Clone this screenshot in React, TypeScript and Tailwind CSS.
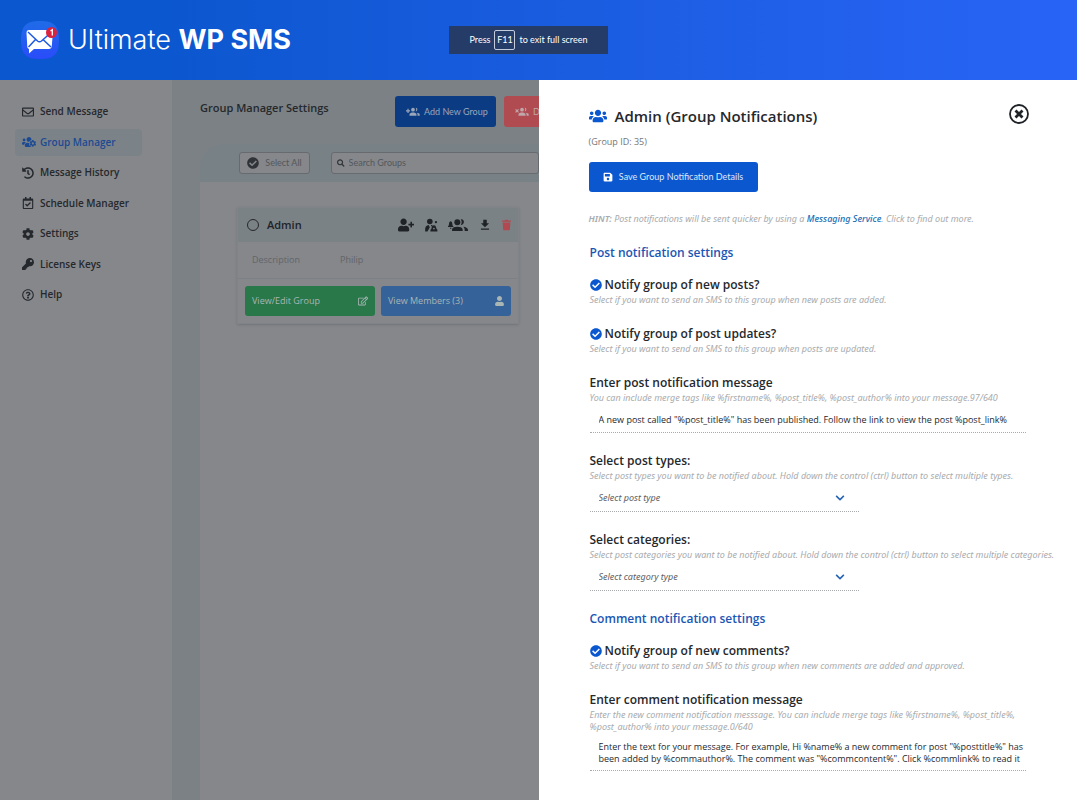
import { useState } from "react";
import type { ReactNode } from "react";
import {
  FaChevronDown,
  FaCog,
  FaCheckCircle,
  FaHistory,
  FaKey,
  FaRegCalendarCheck,
  FaRegEdit,
  FaRegEnvelope,
  FaRegQuestionCircle,
  FaSave,
  FaSearch,
  FaTrash,
  FaUser,
  FaUserPlus,
  FaUsers,
  FaUsersCog,
} from "react-icons/fa";
import { MdDownload } from "react-icons/md";

const NAV = [
  { label: "Send Message", icon: FaRegEnvelope },
  { label: "Group Manager", icon: FaUsersCog, active: true },
  { label: "Message History", icon: FaHistory },
  { label: "Schedule Manager", icon: FaRegCalendarCheck },
  { label: "Settings", icon: FaCog },
  { label: "License Keys", icon: FaKey },
  { label: "Help", icon: FaRegQuestionCircle },
];

function Logo() {
  return (
    <svg className="w-10 h-10" viewBox="0 0 40 40">
      <defs>
        <linearGradient id="logo-bg" x1="0" y1="0" x2="0" y2="1">
          <stop offset="0" stopColor="#1f6ce8" />
          <stop offset="1" stopColor="#2a4cfa" />
        </linearGradient>
      </defs>
      <path d="M20 1C34 1 39 6 39 20S34 39 20 39 1 34 1 20 6 1 20 1z" fill="url(#logo-bg)" />
      <path d="M9 10h21q3 0 2.800 3l-1 13q-.3 3-3 3H14l-5 4.500V29q-1.500-.5-1.700-2L6.500 13q0-3 2.500-3z" fill="#fff" />
      <path d="M8 12l9.500 9q2 1.500 4 0l9-8M8.500 27l7-7.500M31 27l-7.500-7" fill="none" stroke="#1c58e4" strokeWidth="1.500" />
      <circle cx="31.500" cy="12.500" r="5.500" fill="#d9233f" />
      <path d="M30.500 11l1.800-1.200v5.700" fill="none" stroke="#fff" strokeWidth="1.300" />
    </svg>
  );
}

// people with a small plus or cross at the upper left
function GroupAction({ mark }: { mark: "plus" | "cross" }) {
  return (
    <svg className="w-[14px] h-[14px]" viewBox="0 0 24 24" fill="currentColor">
      <path d={mark === "plus" ? "M0 10h7M3.500 6.500v7" : "M1 7.500l5 5m0-5l-5 5"} stroke="currentColor" strokeWidth="2" />
      <circle cx="12" cy="8" r="3.200" />
      <path d="M16.500 4.900c3.600-.6 4.400 5.600 0 6.200 1.500-1.800 1.500-4.400 0-6.200zM12 13c-2.500 0-6 1-6 3v2.500h12V16c0-2-3.500-3-6-3zM18.500 13.200c2.500.4 5 1.300 5 2.900v2.400h-3.700V16c0-1.200-.5-2.100-1.300-2.800z" />
    </svg>
  );
}

function MemberBell() {
  return (
    <svg className="w-[14px] h-[14px]" viewBox="0 0 24 24" fill="currentColor">
      <circle cx="10" cy="6" r="4.800" />
      <path d="M2 23v-4q0-6 6-7l2 4-4 7zM12 12h3l-2.500 3z" />
      <path d="M11 20q2-1 2-3.500 0-3.500 3.500-4T21 16.500q0 2.500 2 3.500v3H11z" />
      <circle cx="17" cy="18" r="1.500" fill="#7a8286" />
      <circle cx="20.500" cy="7" r="2" />
    </svg>
  );
}

function GroupBell() {
  return (
    <svg className="w-5 h-4" viewBox="0 0 30 24" fill="currentColor">
      <path d="M0 14q1.500-1 1.500-4 0-3 2.500-3.500Q6.500 7 6.500 10q0 3 1.500 4v1H0zM3 16h2v1.500H3z" />
      <circle cx="14" cy="8" r="4.500" />
      <path d="M6 21v-2q0-4.500 8-4.500t8 4.500v2zM19 3.500c6-1 7 8 0 9 2-3 2-6 0-9zM23 14.500q6 .500 7 4.500v2h-5v-2q0-3-2-4.500z" />
    </svg>
  );
}

function CloseIcon() {
  return (
    <svg className="w-5 h-5" viewBox="0 0 20 20" fill="none" stroke="currentColor">
      <circle cx="10" cy="10" r="9" strokeWidth="1.800" />
      <path d="M6.500 6.500l7 7M13.500 6.500l-7 7" strokeWidth="2.800" />
    </svg>
  );
}

function Sidebar() {
  return (
    <aside className="w-[172px] shrink-0 bg-[#85878b] pl-[15px] pt-[18px]">
      <nav className="flex h-[210px] w-[127px] flex-col justify-between">
        {NAV.map(({ label, icon: Icon, active }) => (
          <a
            key={label}
            href="#"
            className={`flex h-[27px] items-center gap-1 rounded pl-[7px] text-[10px] font-semibold whitespace-nowrap ${
              active ? "bg-[#7c8388] text-[#1c4a92]" : "text-[#25282c]"
            }`}
          >
            <Icon className={active ? "w-[14px] h-[14px]" : "w-3 h-3 mr-[2px]"} />
            {label}
          </a>
        ))}
      </nav>
    </aside>
  );
}

function GroupCard() {
  return (
    <article className="mx-[37px] mt-[25px] w-[282px] border border-[#808387] shadow-sm">
      <header className="flex h-[34px] items-center bg-[#7a8286] pr-[7px] pl-[9px] text-[#1f2327]">
        <label className="flex flex-1 items-center gap-2 text-[11px] font-semibold">
          <input type="radio" className="size-3 appearance-none rounded-full border border-[#25282c]" />
          Admin
        </label>
        <div className="flex items-center gap-[10px]">
          <button aria-label="Add member"><FaUserPlus className="w-4 h-[14px]" /></button>
          <button aria-label="Notify member"><MemberBell /></button>
          <button aria-label="Notify group"><GroupBell /></button>
          <button aria-label="Download"><MdDownload className="w-[14px] h-[14px]" /></button>
          <button aria-label="Delete" className="text-[#b04a50]"><FaTrash className="w-[9px] h-3" /></button>
        </div>
      </header>
      <dl className="flex h-[37px] items-center border-b border-[#7d8084] px-[14px] text-[9px] text-[#626569]">
        <dt className="w-[88px]">Description</dt>
        <dd>Philip</dd>
      </dl>
      <div className="grid grid-cols-2 gap-[6px] p-[7px] text-[9px] text-[#a9b6b4]">
        <button className="flex h-[30px] items-center justify-between rounded-[3px] bg-[#28784a] px-[7px]">
          View/Edit Group
          <FaRegEdit className="w-[10px] h-[10px]" />
        </button>
        <button className="flex h-[30px] items-center justify-between rounded-[3px] bg-[#36629a] px-[7px]">
          View Members (3)
          <FaUser className="w-[9px] h-[10px]" />
        </button>
      </div>
    </article>
  );
}

function GroupManager() {
  return (
    <main className="flex min-w-0 flex-1 flex-col overflow-hidden bg-[#7b8184] pl-7 pt-4">
      <div className="flex items-start whitespace-nowrap">
        <h1 className="w-[195px] shrink-0 pt-1 text-[11px] font-semibold text-[#25282c]">Group Manager Settings</h1>
        <button className="flex h-[31px] w-[101px] shrink-0 items-center gap-1 rounded-[3px] bg-[#0b3c83] pl-[11px] font-[Lato,sans-serif] text-[9px] text-[#9aa6ba]">
          <GroupAction mark="plus" />
          Add New Group
        </button>
        <button className="ml-2 flex h-[31px] w-[101px] shrink-0 items-center gap-1 rounded-[3px] bg-[#b14b52] pl-[11px] font-[Lato,sans-serif] text-[9px] text-[#bfa7aa]">
          <GroupAction mark="cross" />
          Delete Group
        </button>
      </div>
      <section className="mt-[17px] flex flex-1 flex-col overflow-hidden rounded-tl-[24px] bg-[#85878b]">
        <div className="flex h-[38px] shrink-0 items-center gap-[21px] bg-[#788186] pl-[39px] font-[Lato,sans-serif] text-[9px] text-[#53575c]">
          <button className="flex h-[22px] w-[71px] shrink-0 items-center justify-center gap-[6px] rounded-[3px] border border-[#676b70] bg-[#85878b]">
            <FaCheckCircle className="w-3 h-3 text-[#303337]" />
            Select All
          </button>
          <label className="flex h-[22px] flex-1 items-center gap-1 rounded-[3px] border border-[#676b70] bg-[#85878b] pl-[5px]">
            <FaSearch className="w-2 h-2 text-[#303337]" />
            <input
              aria-label="Search groups"
              placeholder="Search Groups"
              className="w-full bg-transparent outline-none placeholder:text-[#53575c]"
            />
          </label>
        </div>
        <GroupCard />
      </section>
    </main>
  );
}

function Hint({ children }: { children: ReactNode }) {
  return <p className="mt-px font-['Noto_Sans',sans-serif] text-[9px] leading-3 text-[#a8abae] italic">{children}</p>;
}

function SectionTitle({ children }: { children: ReactNode }) {
  return <h3 className="-mb-1 text-[12px] leading-4 font-semibold text-[#1a56b4]">{children}</h3>;
}

function Toggle({ label, hint }: { label: string; hint: string }) {
  const [on, setOn] = useState(true);
  return (
    <div>
      <label className="flex items-center gap-[3px] text-[12px] leading-4 font-semibold text-[#25282c]">
        <input type="checkbox" checked={on} onChange={() => setOn(!on)} className="peer sr-only" />
        <FaCheckCircle className="w-3 h-3 text-[#b5b8bb] peer-checked:text-[#0b57d0]" />
        {label}
      </label>
      <Hint>{hint}</Hint>
    </div>
  );
}

function Picker({ id, label, hint, placeholder }: { id: string; label: string; hint: string; placeholder: string }) {
  return (
    <div>
      <label htmlFor={id} className="block text-[12px] leading-4 font-semibold text-[#25282c]">{label}</label>
      <Hint><span className="whitespace-nowrap">{hint}</span></Hint>
      <div className="mt-[3px] flex h-[27px] w-[269px] items-center border-b border-dotted border-[#a8abae] pr-[14px]">
        <select id={id} className="flex-1 appearance-none bg-transparent pl-[9px] font-['Noto_Sans',sans-serif] text-[9px] text-[#5d6064] italic outline-none">
          <option>{placeholder}</option>
        </select>
        <FaChevronDown className="w-[10px] h-[10px] text-[#2664b4]" />
      </div>
    </div>
  );
}

function NotificationDrawer() {
  return (
    <section className="w-1/2 shrink-0 bg-white pr-[29px] pl-[50px] pt-6">
      <header className="flex items-start justify-between">
        <h2 className="flex h-6 items-center gap-2 text-[15px] font-semibold text-[#25282c]">
          <FaUsers className="w-[18px] h-[18px] text-[#0b57d0]" />
          Admin (Group Notifications)
        </h2>
        <button aria-label="Close" className="mr-[19px] text-[#1f2327]"><CloseIcon /></button>
      </header>
      <p className="mt-2 text-[9px] leading-3 text-[#73767a]">(Group ID: 35)</p>
      <button className="mt-[14px] flex h-[30px] w-[169px] items-center justify-center gap-[6px] rounded-[3px] bg-[#0b57d0] font-[Lato,sans-serif] text-[9px] whitespace-nowrap text-[#dbe7fb]">
        <FaSave className="w-[10px] h-[10px] text-white" />
        Save Group Notification Details
      </button>
      <div className="mt-[21px]">
        <Hint>
          <b className="font-semibold">HINT:</b> Post notifications will be sent quicker by using a{" "}
          <a href="#" className="font-medium text-[#1a6db5]">Messaging Service</a>. Click to find out more.
        </Hint>
      </div>

      <div className="mt-5 flex flex-col gap-5 pl-px">
        <SectionTitle>Post notification settings</SectionTitle>
        <Toggle label="Notify group of new posts?" hint="Select if you want to send an SMS to this group when new posts are added." />
        <Toggle label="Notify group of post updates?" hint="Select if you want to send an SMS to this group when posts are updated." />
        <div>
          <label htmlFor="post-message" className="block text-[12px] leading-4 font-semibold text-[#25282c]">
            Enter post notification message
          </label>
          <Hint>You can include merge tags like %firstname%, %post_title%, %post_author% into your message.97/640</Hint>
          <input
            id="post-message"
            defaultValue={'A new post called "%post_title%" has been published. Follow the link to view the post %post_link%'}
            className="mt-[2px] block h-[27px] w-[436px] border-b border-dotted border-[#a8abae] pl-[9px] text-[9px] text-[#25282c] outline-none"
          />
        </div>
        <Picker
          id="post-types"
          label="Select post types:"
          hint="Select post types you want to be notified about. Hold down the control (ctrl) button to select multiple types."
          placeholder="Select post type"
        />
        <Picker
          id="categories"
          label="Select categories:"
          hint="Select post categories you want to be notified about. Hold down the control (ctrl) button to select multiple categories."
          placeholder="Select category type"
        />
        <SectionTitle>Comment notification settings</SectionTitle>
        <Toggle label="Notify group of new comments?" hint="Select if you want to send an SMS to this group when new comments are added and approved." />
        <div>
          <label htmlFor="comment-message" className="block text-[12px] leading-4 font-semibold text-[#25282c]">
            Enter comment notification message
          </label>
          <Hint>Enter the new comment notification messsage. You can include merge tags like %firstname%, %post_title%, %post_author% into your message.0/640</Hint>
          <textarea
            id="comment-message"
            rows={2}
            defaultValue={'Enter the text for your message. For example, Hi %name% a new comment for post "%posttitle%" has been added by %commauthor%. The comment was "%commcontent%". Click %commlink% to read it'}
            className="mt-2 block h-[30px] w-[436px] resize-none overflow-hidden border-b border-dotted border-[#a8abae] pl-[9px] text-[9px] leading-3 text-[#25282c] outline-none"
          />
        </div>
      </div>
    </section>
  );
}

export default function App() {
  return (
    <div className="flex min-h-screen flex-col font-['Open_Sans',sans-serif]">
      <header className="relative flex h-20 shrink-0 items-center gap-2 bg-linear-to-r from-[#0b57cf] from-15% to-[#2864f6] pl-5">
        <Logo />
        <span className="font-[Inter,sans-serif] text-[27px] font-light text-white">
          Ultimate <b className="font-bold">WP SMS</b>
        </span>
        <div className="absolute top-[26px] left-[449px] flex h-7 w-[159px] items-center justify-center gap-1 bg-[#263c68] font-[Lato,sans-serif] text-[9px] text-white">
          Press
          <kbd className="flex h-5 w-[21px] items-center justify-center rounded-[2px] border border-[#c3cbdc] font-[Lato,sans-serif]">F11</kbd>
          to exit full screen
        </div>
      </header>
      <div className="flex flex-1">
        <Sidebar />
        <GroupManager />
        <NotificationDrawer />
      </div>
    </div>
  );
}
